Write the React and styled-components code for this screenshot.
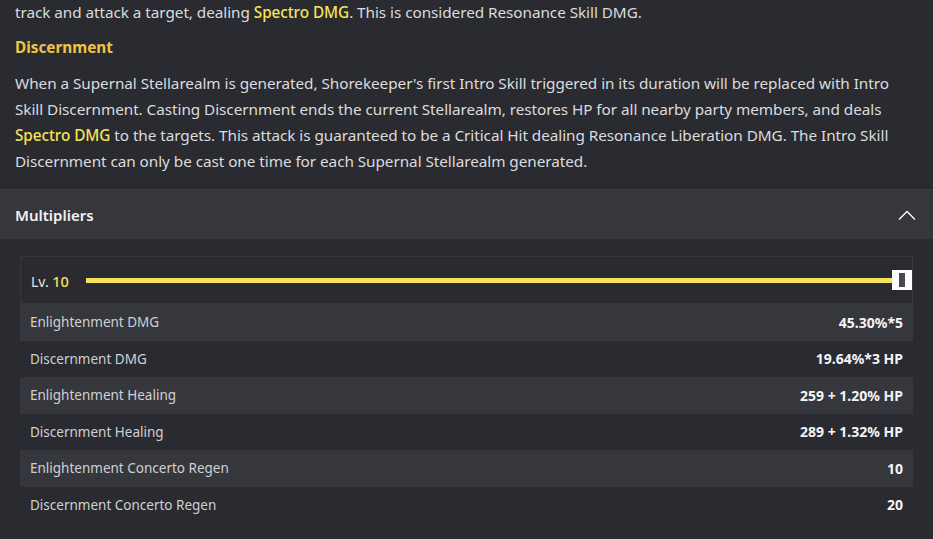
import styled, { createGlobalStyle } from "styled-components";

const GlobalStyle = createGlobalStyle`
  html, body {
    margin: 0;
    padding: 0;
    background: #2a2b30;
    overflow: hidden;
  }
  body {
    font-family: "Noto Sans", "Open Sans", sans-serif;
    color: #dcdcde;
  }
`;

const multipliers = [
  { name: "Enlightenment DMG", value: "45.30%*5" },
  { name: "Discernment DMG", value: "19.64%*3 HP" },
  { name: "Enlightenment Healing", value: "259 + 1.20% HP" },
  { name: "Discernment Healing", value: "289 + 1.32% HP" },
  { name: "Enlightenment Concerto Regen", value: "10" },
  { name: "Discernment Concerto Regen", value: "20" },
];

function App() {
  return (
    <StPage>
      <GlobalStyle />
      <StDescription>
        <StText $first>
          track and attack a target, dealing <StHighlight>Spectro DMG</StHighlight>. This is
          considered Resonance Skill DMG.
        </StText>
        <StHeading>Discernment</StHeading>
        <StText>
          When a Supernal Stellarealm is generated, Shorekeeper's first Intro Skill triggered in
          its duration will be replaced with Intro Skill Discernment. Casting Discernment ends the
          current Stellarealm, restores HP for all nearby party members, and deals{" "}
          <StHighlight>Spectro DMG</StHighlight> to the targets. This attack is guaranteed to be a
          Critical Hit dealing Resonance Liberation DMG. The Intro Skill Discernment can only be
          cast one time for each Supernal Stellarealm generated.
        </StText>
      </StDescription>

      <StSectionHeader>
        <span>Multipliers</span>
        <svg width="18" height="10" viewBox="0 0 18 10" fill="none">
          <path d="M1 9.5L9 1.5L17 9.5" stroke="#ffffff" strokeWidth="1.3" />
        </svg>
      </StSectionHeader>

      <StSectionBody>
        <StTable>
          <StLevelRow>
            <StLevelLabel>
              Lv. <b>10</b>
            </StLevelLabel>
            <StTrack>
              <StThumb />
            </StTrack>
          </StLevelRow>
          {multipliers.map((row, idx) => (
            <StRow key={row.name} $odd={idx % 2 === 0}>
              <span>{row.name}</span>
              <StValue>{row.value}</StValue>
            </StRow>
          ))}
        </StTable>
      </StSectionBody>
    </StPage>
  );
}

export default App;

const StPage = styled.div`
  width: 933px;
  height: 539px;
  overflow: hidden;
  background: #2a2b30;
`;

const StDescription = styled.section`
  padding: 0 15px 15px;
  margin-top: -1px;
  border-bottom: 1px solid #3c3d42;
`;

const StText = styled.p`
  margin: ${(p) => (p.$first ? "0" : "10px 0 0")};
  font-size: 15.3px;
  letter-spacing: -0.05px;
  line-height: 26px;
  color: #dcdcde;
`;

const StHighlight = styled.span`
  color: #f7e35a;
  font-weight: 500;
`;

const StHeading = styled.h4`
  margin: 9px 0 0;
  font-size: 15.3px;
  line-height: 26px;
  font-weight: 700;
  color: #f0c445;
`;

const StSectionHeader = styled.div`
  display: flex;
  justify-content: space-between;
  align-items: center;
  height: 49px;
  padding: 0 17px 0 15px;
  background: #36373c;

  & > span {
    font-size: 15px;
    font-weight: 600;
    color: #f2f2f2;
  }
`;

const StSectionBody = styled.div`
  padding: 17px 20px 0 20px;
`;

const StTable = styled.div`
  display: flex;
  flex-direction: column;
`;

const StLevelRow = styled.div`
  display: flex;
  align-items: center;
  gap: 17px;
  height: 46px;
  padding-left: 10px;
  border: 1px solid #36373c;
  border-right: 1px solid #3a3b40;
  background: #2a2b30;
`;

const StLevelLabel = styled.div`
  font-size: 14px;
  color: #e4e4e6;
  white-space: nowrap;
  padding-top: 1px;

  & > b {
    font-weight: 500;
    font-size: 14.5px;
    color: #f7e35a;
  }
`;

const StTrack = styled.div`
  position: relative;
  flex: 1;
  height: 5px;
  background: #f7e35a;
`;

const StThumb = styled.div`
  position: absolute;
  right: 0;
  top: 50%;
  width: 20px;
  height: 20px;
  transform: translateY(-50%);
  background: #ffffff;

  &::after {
    content: "";
    position: absolute;
    left: 7px;
    top: 3px;
    width: 6px;
    height: 14px;
    background: #4a4a52;
  }
`;

const StRow = styled.div`
  display: flex;
  justify-content: space-between;
  align-items: center;
  height: 36.5px;
  padding: 0 10px;
  background: ${(p) => (p.$odd ? "#36373c" : "#2a2b30")};
  font-size: 13.5px;
  color: #d0d0d4;
`;

const StValue = styled.span`
  font-weight: 700;
  font-size: 14px;
  color: #f4f4f6;
`;
